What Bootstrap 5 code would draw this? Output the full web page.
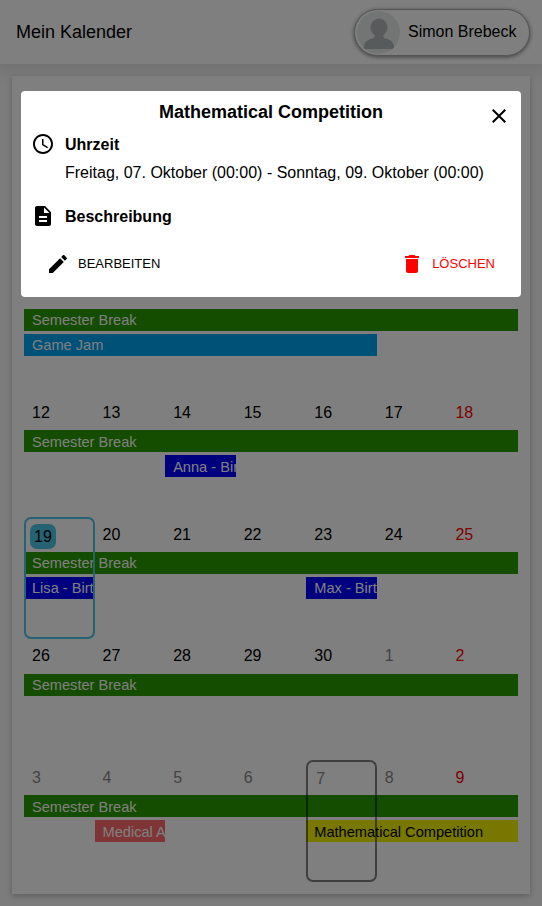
<!DOCTYPE html>
<html lang="de">
<head>
<meta charset="utf-8">
<meta name="viewport" content="width=device-width, initial-scale=1">
<title>Mein Kalender</title>
<link href="https://cdn.jsdelivr.net/npm/bootstrap@5.3.0/dist/css/bootstrap.min.css" rel="stylesheet">
<style>
  body { font-family: "Liberation Sans", Arial, sans-serif; font-size: 16px; line-height: 18px; color: #000; background: #f8f8f8; height: 906px; overflow: hidden; }
  .topbar { height: 64px; background: #fff; box-shadow: 0 2px 14px 6px rgba(0,0,0,.08); }
  .app-title { font-size: 18px; line-height: 20px; }
  .user-chip { height: 47px; width: 176px; padding: 2px; margin-right: 12px; gap: 8px; background: #fff; border: 1px solid #aaa; box-shadow: 0 1px 4px rgba(0,0,0,.5); }
  .avatar { width: 43px; height: 43px; background: #e6eaeb; }
  .calendar { margin: 12px 12px 0; padding: 12px; height: 818px; background: #fff; box-shadow: 0 2px 6px rgba(0,0,0,.25); }
  .month-head { height: 64.2px; }
  .week { display: grid; grid-template-columns: repeat(7, minmax(0, 1fr)); grid-template-rows: 35px 25px 25px 36.6px; }
  .day { grid-row: 1; padding: 8.6px 8px 0; }
  .day:nth-child(1) { grid-column: 1; } .day:nth-child(2) { grid-column: 2; } .day:nth-child(3) { grid-column: 3; } .day:nth-child(4) { grid-column: 4; }
  .day:nth-child(5) { grid-column: 5; } .day:nth-child(6) { grid-column: 6; } .day:nth-child(7) { grid-column: 7; }
  .outside { color: #888; }
  .sunday { color: #f00; }
  .entry { height: 22px; padding: .4px 0 0 8px; font-size: 14.6px; line-height: 22px; color: #fff; white-space: nowrap; overflow: hidden; }
  .line-a { grid-row: 2; }
  .line-b { grid-row: 3; }
  .from-1 { grid-column-start: 1; } .from-2 { grid-column-start: 2; } .from-3 { grid-column-start: 3; } .from-5 { grid-column-start: 5; }
  .span-1 { grid-column-end: span 1; } .span-3 { grid-column-end: span 3; } .span-5 { grid-column-end: span 5; } .span-7 { grid-column-end: span 7; }
  .green { background: #289800; } .sky { background: #00a2ef; } .blue { background: #00f; } .coral { background: #ff6b6b; } .yellow { background: #f0f000; color: #000; }
  .frame { grid-row: 1 / -1; z-index: 1; border: 2px solid #4bc4e6; border-radius: 7px; }
  .frame.picked { border-color: rgba(0,0,0,.5); }
  .day.in-frame { padding: 10px 10px 0; }
  .day.today { padding: 7px 6px 0; }
  .today-mark { height: 25px; width: 26px; padding: 4px; background: #4bc4e6; border-radius: 7px; }
  .shade { background: rgba(0,0,0,.5); z-index: 10; }
  .event-dialog { top: 91px; left: 21px; width: 500px; height: 206px; background: #fff; border-radius: 4px; z-index: 11; }
  .dialog-title { font-size: 18px; line-height: 20px; padding-top: 11px; }
  .close-x { top: 13px; right: 10px; }
  .info { padding-left: 10px; gap: 10px; height: 24px; }
  .info.time { margin-top: 10px; }
  .info span { padding-top: 2px; }
  .when { padding-left: 44px; padding-top: 8px; height: 48px; }
  .actions { margin-top: 24px; padding: 0 26px 0 25px; }
  .action { font-size: 13px; line-height: 24px; background: none; border: 0; padding: 0; }
</style>
<script src="https://cdn.jsdelivr.net/npm/bootstrap@5.3.0/dist/js/bootstrap.bundle.min.js"></script>
</head>
<body>
<header class="topbar d-flex justify-content-between align-items-center ps-3">
  <span class="app-title">Mein Kalender</span>
  <div class="user-chip rounded-pill d-flex align-items-center">
    <svg class="avatar rounded-circle" viewBox="0 0 43 43"><ellipse cx="22" cy="16.500" rx="8.500" ry="9" fill="#b0b6b8"/><path d="M7 38v-3c1-5 5-7 10-8l1-3h8l1 3c5 1 9 3 10 8v3z" fill="#b0b6b8"/></svg>
    <span>Simon Brebeck</span>
  </div>
</header>
<main class="calendar">
  <div class="month-head"></div>
  <div class="week">
    <div class="entry green line-a from-1 span-7"></div>
  </div>
  <div class="week">
    <div class="entry green line-a from-1 span-7">Semester Break</div>
    <div class="entry sky line-b from-1 span-5">Game Jam</div>
  </div>
  <div class="week">
    <div class="day">12</div><div class="day">13</div><div class="day">14</div><div class="day">15</div><div class="day">16</div><div class="day">17</div><div class="day sunday">18</div>
    <div class="entry green line-a from-1 span-7">Semester Break</div>
    <div class="entry blue line-b from-3 span-1">Anna - Birthday</div>
  </div>
  <div class="week">
    <div class="day today"><div class="today-mark">19</div></div><div class="day">20</div><div class="day">21</div><div class="day">22</div><div class="day">23</div><div class="day">24</div><div class="day sunday">25</div>
    <div class="entry green line-a from-1 span-7">Semester Break</div>
    <div class="entry blue line-b from-1 span-1">Lisa - Birthday</div>
    <div class="entry blue line-b from-5 span-1">Max - Birthday</div>
    <div class="frame from-1 span-1"></div>
  </div>
  <div class="week">
    <div class="day">26</div><div class="day">27</div><div class="day">28</div><div class="day">29</div><div class="day">30</div><div class="day outside">1</div><div class="day sunday">2</div>
    <div class="entry green line-a from-1 span-7">Semester Break</div>
  </div>
  <div class="week">
    <div class="day outside">3</div><div class="day outside">4</div><div class="day outside">5</div><div class="day outside">6</div><div class="day outside in-frame">7</div><div class="day outside">8</div><div class="day sunday">9</div>
    <div class="entry green line-a from-1 span-7">Semester Break</div>
    <div class="entry coral line-b from-2 span-1">Medical Appointment</div>
    <div class="entry yellow line-b from-5 span-3">Mathematical Competition</div>
    <div class="frame picked from-5 span-1"></div>
  </div>
</main>
<div class="shade position-fixed top-0 start-0 w-100 h-100"></div>
<section class="event-dialog position-absolute" role="dialog" aria-label="Mathematical Competition">
  <div class="dialog-title text-center fw-bold">Mathematical Competition</div>
  <svg class="close-x position-absolute" width="24" height="24" viewBox="0 0 24 24"><path d="M19 6.410 17.590 5 12 10.590 6.410 5 5 6.410 10.590 12 5 17.590 6.410 19 12 13.410 17.590 19 19 17.590 13.410 12z"/></svg>
  <div class="info time d-flex align-items-center">
    <svg class="flex-shrink-0" width="24" height="24" viewBox="0 0 24 24"><path d="M11.990 2C6.470 2 2 6.480 2 12s4.470 10 9.990 10C17.520 22 22 17.520 22 12S17.520 2 11.990 2zM12 20c-4.420 0-8-3.580-8-8s3.580-8 8-8 8 3.580 8 8-3.580 8-8 8zm.5-13H11v6l5.250 3.150.75-1.230-4.500-2.670z"/></svg>
    <span class="fw-bold">Uhrzeit</span>
  </div>
  <div class="when">Freitag, 07. Oktober (00:00) - Sonntag, 09. Oktober (00:00)</div>
  <div class="info d-flex align-items-center">
    <svg class="flex-shrink-0" width="24" height="24" viewBox="0 0 24 24"><path d="M14 2H6c-1.100 0-1.990.9-1.990 2L4 20c0 1.100.89 2 1.990 2H18c1.100 0 2-.9 2-2V8l-6-6zm2 16H8v-2h8v2zm0-4H8v-2h8v2zm-3-5V3.500L18.500 9H13z"/></svg>
    <span class="fw-bold">Beschreibung</span>
  </div>
  <div class="actions d-flex justify-content-between">
    <button class="action d-flex gap-2"><svg width="24" height="24" viewBox="0 0 24 24"><path d="M3 17.250V21h3.750L17.810 9.940l-3.750-3.750L3 17.250zM20.710 7.040c.39-.39.39-1.020 0-1.410l-2.340-2.340c-.39-.39-1.020-.39-1.410 0l-1.830 1.830 3.750 3.750 1.830-1.830z"/></svg>BEARBEITEN</button>
    <button class="action d-flex gap-2 sunday"><svg width="24" height="24" viewBox="0 0 24 24" fill="currentColor"><path d="M6 19c0 1.100.9 2 2 2h8c1.100 0 2-.9 2-2V7H6v12zM19 4h-3.500l-1-1h-5l-1 1H5v2h14V4z"/></svg>LÖSCHEN</button>
  </div>
</section>
</body>
</html>
